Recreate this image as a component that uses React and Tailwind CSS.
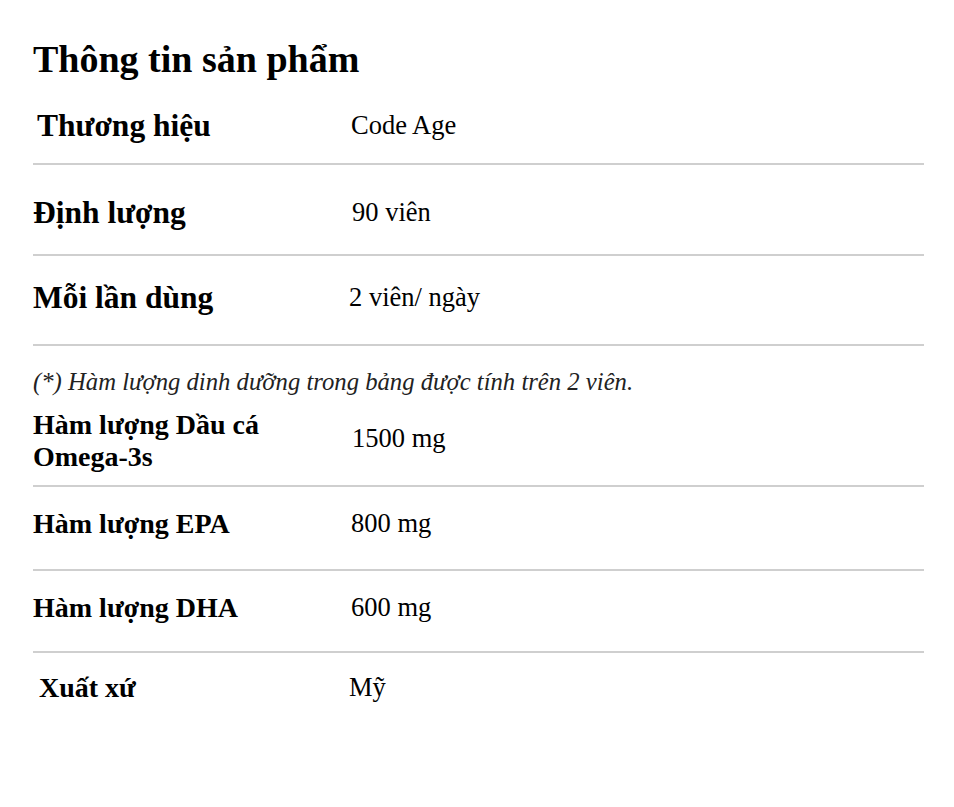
const rows = [
  { label: 'Thương hiệu', value: 'Code Age', h: 'h-[69px]', pad: 'pb-[7px]', lx: 'pl-[4px]', vx: '' },
  { label: 'Định lượng', value: '90 viên', h: 'h-[91px]', pad: 'pt-[7px]', lx: '', vx: 'pl-[1px]' },
  { label: 'Mỗi lần dùng', value: '2 viên/ ngày', h: 'h-[90px]', pad: 'pb-[4px]', lx: '', vx: '-ml-[2px]' },
];

const nutrients = [
  { label: ['Hàm lượng Dầu cá', 'Omega-3s'], value: '1500 mg', h: 'h-[87px]', pad: 'pb-[4px]', vx: 'pl-[1px] pb-[4px]' },
  { label: ['Hàm lượng EPA'], value: '800 mg', h: 'h-[84px]', pad: 'pb-[8px]', vx: '' },
  { label: ['Hàm lượng DHA'], value: '600 mg', h: 'h-[82px]', pad: 'pb-[6px]', vx: '' },
];

export default function App() {
  return (
    <div className="w-[954px] h-[807px] bg-white text-black px-[33px] font-['Liberation_Serif','Times_New_Roman',serif]">
      <div className="h-[96px] flex items-center pt-[22px]">
        <h1 className="text-[38px] font-bold leading-none">Thông tin sản phẩm</h1>
      </div>

      <div className="w-[891px]">
        {rows.map((r) => (
          <div key={r.label} className={`flex items-center border-b-2 border-[#cfcfcf] ${r.h} ${r.pad}`}>
            <div className={`w-[318px] text-[31.5px] font-bold ${r.lx}`}>{r.label}</div>
            <div className={`text-[26.5px] ${r.vx}`}>{r.value}</div>
          </div>
        ))}

        <div className="h-[54px] flex items-center pt-[18px]">
          <p className="text-[24.7px] italic text-[#222]">(*) Hàm lượng dinh dưỡng trong bảng được tính trên 2 viên.</p>
        </div>

        {nutrients.map((r) => (
          <div key={r.value} className={`flex items-center border-b-2 border-[#cfcfcf] ${r.h} ${r.pad}`}>
            <div className="w-[318px] text-[28px] font-bold leading-[32px]">
              {r.label.map((l) => (
                <div key={l}>{l}</div>
              ))}
            </div>
            <div className={`text-[26.5px] ${r.vx}`}>{r.value}</div>
          </div>
        ))}

        <div className="h-[70px] flex items-center">
          <div className="w-[316px] pl-[6px] text-[28px] font-bold">Xuất xứ</div>
          <div className="text-[26.5px]">Mỹ</div>
        </div>
      </div>
    </div>
  );
}
